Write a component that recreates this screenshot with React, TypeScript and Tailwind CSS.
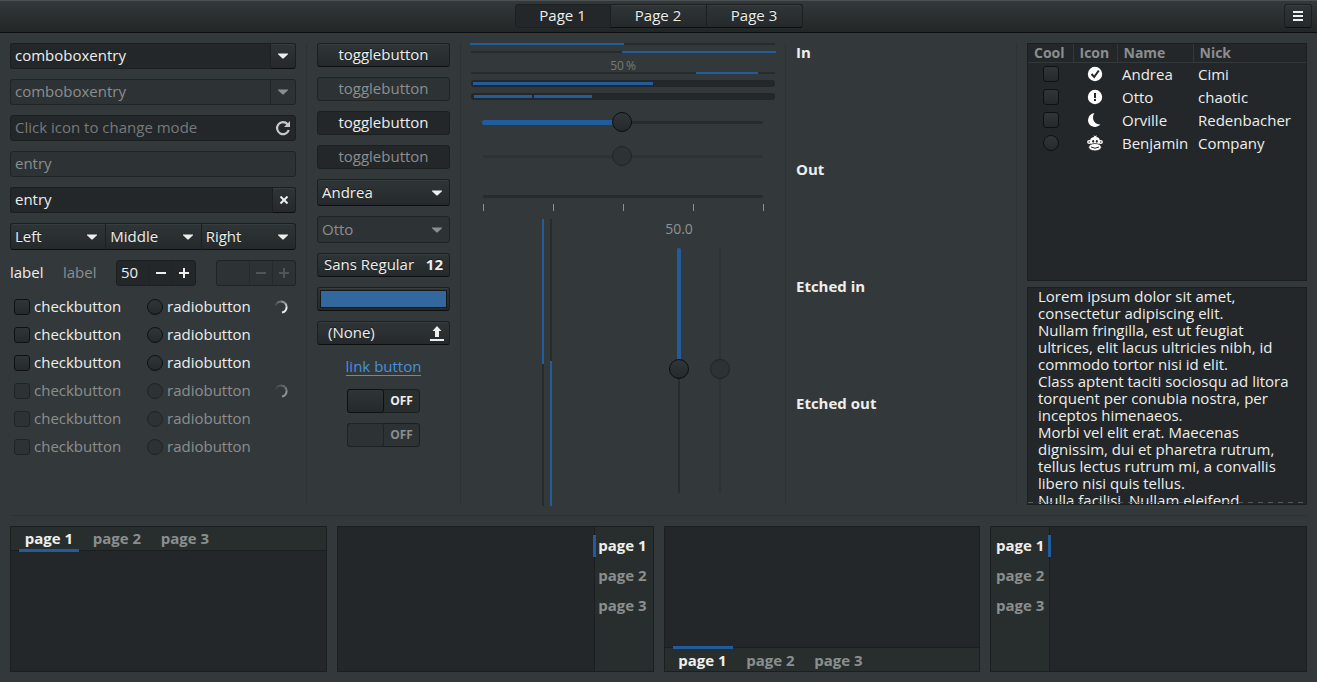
import { useState } from 'react';
import type { ReactNode } from 'react';
import clsx from 'clsx';

const raised =
  'rounded-[3px] border border-[#1b1f20] border-b-[#0d0f0f] bg-linear-to-b from-[#2f3537] to-[#25292b] text-[#eeeeec] [text-shadow:0_-1px_#15181a] shadow-[inset_0_1px_#383e40]';
const insensitive = 'rounded-[3px] border border-[#1f2324] bg-[#2d3234] text-[#8b8e8f]';
const sunken = 'rounded-[3px] border border-[#1b1f20] bg-[#232729] text-[#eeeeec]';

const loremText = `Lorem ipsum dolor sit amet,
consectetur adipiscing elit.
Nullam fringilla, est ut feugiat
ultrices, elit lacus ultricies nibh, id
commodo tortor nisi id elit.
Class aptent taciti sociosqu ad litora
torquent per conubia nostra, per
inceptos himenaeos.
Morbi vel elit erat. Maecenas
dignissim, dui et pharetra rutrum,
tellus lectus rutrum mi, a convallis
libero nisi quis tellus.
Nulla facilisi. Nullam eleifend
lectus eu velit.`;

function Arrow({ className }: { className?: string }) {
  return (
    <svg viewBox="0 0 10 6" className={clsx('pointer-events-none h-[6px] w-[10px]', className)} fill="currentColor">
      <path d="M0 .5h10v.8L5.500 5.500h-1L0 1.300z" />
    </svg>
  );
}

function Combo({ options, disabled, className, label }: { options: string[]; disabled?: boolean; className?: string; label: string }) {
  return (
    <div className="relative min-w-0 flex-1">
      <select
        aria-label={label}
        disabled={disabled}
        className={clsx('block h-[27px] w-full appearance-none px-1 pb-px leading-5 outline-none disabled:opacity-100', disabled ? insensitive : raised, className)}
      >
        {options.map((o) => (
          <option key={o}>{o}</option>
        ))}
      </select>
      <Arrow className={clsx('absolute top-[11px] right-2', disabled ? 'text-[#8b8e8f]' : 'text-[#eeeeec]')} />
    </div>
  );
}

function ComboEntry({ disabled }: { disabled?: boolean }) {
  return (
    <div className="flex h-[26px]">
      <input
        type="text"
        aria-label="Combo box entry"
        defaultValue="comboboxentry"
        disabled={disabled}
        className={clsx('min-w-0 flex-1 rounded-r-none! border-r-0! px-1 pb-[2px] outline-none', disabled ? insensitive : sunken)}
      />
      <button
        type="button"
        aria-label="Show choices"
        disabled={disabled}
        className={clsx('flex w-[26px] items-center justify-center rounded-l-none!', disabled ? insensitive : raised)}
      >
        <Arrow />
      </button>
    </div>
  );
}

function Spin({ value, disabled }: { value: string; disabled?: boolean }) {
  return (
    <div className={clsx('flex h-[26px] w-20', disabled ? insensitive : sunken)}>
      <input type="text" aria-label="Amount" defaultValue={value} disabled={disabled} className="w-8 bg-transparent pb-[2px] pl-1 outline-none" />
      {['M0 4h10v2H0z', 'M0 4h4V0h2v4h4v2H6v4H4V6H0z'].map((d, i) => (
        <button
          key={d}
          type="button"
          disabled={disabled}
          aria-label={i ? 'Increase' : 'Decrease'}
          className={clsx('flex w-[23px] items-center justify-center border-l', disabled ? 'border-[#262a2c] text-[#505556]' : 'border-[#202425]')}
        >
          <svg viewBox="0 0 10 10" className="size-[10px]" fill="currentColor">
            <path d={d} />
          </svg>
        </button>
      ))}
    </div>
  );
}

function Tick({ type, disabled, name, label }: { type: 'checkbox' | 'radio'; disabled?: boolean; name?: string; label?: string }) {
  return (
    <input
      type={type}
      name={name}
      aria-label={label}
      disabled={disabled}
      className={clsx(
        'size-4 shrink-0 appearance-none border checked:bg-[#215d9c]',
        type === 'radio' ? 'rounded-full' : 'rounded-[3px]',
        disabled ? 'border-[#202425] bg-[#2d3234]' : 'border-[#0e1011] bg-linear-to-b from-[#303638] to-[#25292b]'
      )}
    />
  );
}

function Spinner({ dim }: { dim?: boolean }) {
  return (
    <svg viewBox="0 0 14 14" className={clsx('size-[14px]', dim && 'opacity-50')} fill="none" stroke="#eeeeec" strokeWidth="2">
      <path d="M1.6 5.4A5.6 5.6 0 0 1 3.4 2.7" opacity=".15" />
      <path d="M3.4 2.7A5.6 5.6 0 0 1 7 1.4" opacity=".3" />
      <path d="M7 1.4A5.6 5.6 0 0 1 11.3 3.4" opacity=".5" />
      <path d="M11.3 3.4A5.6 5.6 0 0 1 12.6 7" opacity=".75" />
      <path d="M12.6 7A5.6 5.6 0 0 1 8 12.5" />
    </svg>
  );
}

function CheckRow({ disabled, spinner }: { disabled?: boolean; spinner?: boolean }) {
  return (
    <div className={clsx('flex h-[22px] items-center pl-1', disabled && 'text-[#8b8e8f]')}>
      <label className="flex w-[133px] items-center gap-1">
        <Tick type="checkbox" disabled={disabled} />
        <span className="pb-[2px]">checkbutton</span>
      </label>
      <label className="flex items-center gap-1">
        <Tick type="radio" name={disabled ? 'radio-off' : 'radio-on'} disabled={disabled} />
        <span className="pb-[2px]">radiobutton</span>
      </label>
      {spinner && (
        <span className="mr-2 ml-auto">
          <Spinner dim={disabled} />
        </span>
      )}
    </div>
  );
}

function EntryColumn() {
  return (
    <div>
      <div className="flex flex-col gap-[10px]">
        <ComboEntry />
        <ComboEntry disabled />
        <div className={clsx('flex h-[26px] items-center', sunken)}>
          <input
            type="text"
            aria-label="Mode"
            placeholder="Click icon to change mode"
            className="min-w-0 flex-1 bg-transparent px-1 pb-[2px] outline-none placeholder:text-[#76797a]"
          />
          <button type="button" aria-label="Change mode" className="mr-1 text-[#c8c9c8]">
            <svg viewBox="0 0 16 16" className="size-4" fill="none" stroke="currentColor" strokeWidth="2.2">
              <path d="M12.600 4.200A6 6 0 1 0 13.800 10" />
              <path d="M15 1v6H9z" fill="currentColor" stroke="none" />
            </svg>
          </button>
        </div>
        <input type="text" aria-label="Disabled entry" defaultValue="entry" disabled className={clsx('h-[26px] w-full px-1 pb-[2px]', insensitive)} />
        <div className="flex h-[26px]">
          <input type="text" aria-label="Entry" defaultValue="entry" className={clsx('min-w-0 flex-1 rounded-r-none! border-r-0! px-1 pb-[2px] outline-none', sunken)} />
          <button type="button" aria-label="Clear" className={clsx('flex w-6 items-center justify-center rounded-l-none!', raised)}>
            <svg viewBox="0 0 8 8" className="size-2" stroke="currentColor" strokeWidth="2">
              <path d="M.5.5l7 7M7.500.5l-7 7" />
            </svg>
          </button>
        </div>
        <div className="flex">
          <Combo label="Left" options={['Left']} className="rounded-r-none! border-r-0!" />
          <Combo label="Middle" options={['Middle']} className="rounded-none! border-r-0!" />
          <Combo label="Right" options={['Right']} className="rounded-l-none!" />
        </div>
        <div className="flex items-center">
          <span className="w-[53px] pb-[2px]">label</span>
          <span className="w-[53px] pb-[2px] text-[#8b8e8f]">label</span>
          <Spin value="50" />
          <div className="ml-auto">
            <Spin value="" disabled />
          </div>
        </div>
      </div>
      <div className="mt-[10px] flex flex-col gap-[6px]">
        <CheckRow spinner />
        <CheckRow />
        <CheckRow />
        <CheckRow disabled spinner />
        <CheckRow disabled />
        <CheckRow disabled />
      </div>
    </div>
  );
}

function Switch({ disabled }: { disabled?: boolean }) {
  return (
    <button
      type="button"
      role="switch"
      aria-checked="false"
      disabled={disabled}
      className={clsx(
        'mx-auto flex h-6 w-[73px] rounded-[3px] border border-[#1b1f20] text-xs font-bold',
        disabled ? 'bg-[#2d3234] text-[#8b8e8f]' : 'bg-[#282e2d] text-[#eeeeec]'
      )}
    >
      <span
        className={clsx(
          '-my-px -ml-px h-6 w-[37px] rounded-[3px] border',
          disabled ? 'border-[#1f2324]' : 'border-[#0e1011] bg-linear-to-b from-[#2f3537] to-[#25292b]'
        )}
      />
      <span className="flex h-full flex-1 items-center justify-center">OFF</span>
    </button>
  );
}

function ButtonColumn() {
  return (
    <div className="flex flex-col gap-[10px]">
      <button type="button" className={clsx('h-6 pb-[2px]', raised)}>togglebutton</button>
      <button type="button" disabled className={clsx('h-6 pb-[2px]', insensitive)}>togglebutton</button>
      <button type="button" aria-pressed="true" className={clsx('h-6 pb-[2px]', sunken)}>togglebutton</button>
      <button type="button" aria-pressed="true" disabled className={clsx('h-6 pb-[2px]', sunken, 'text-[#8b8e8f]!')}>togglebutton</button>
      <div className="flex">
        <Combo label="Person" options={['Andrea', 'Otto']} />
      </div>
      <div className="flex">
        <Combo label="Other person" options={['Otto']} disabled />
      </div>
      <button type="button" className={clsx('flex h-6 items-center justify-between px-[6px] pb-[2px]', raised)}>
        <span>Sans Regular</span>
        <span className="font-bold">12</span>
      </button>
      <input
        type="color"
        aria-label="Colour"
        defaultValue="#33689f"
        className={clsx('h-6 w-full p-[2px] [&::-webkit-color-swatch]:rounded-none [&::-webkit-color-swatch]:border-[#15181a] [&::-webkit-color-swatch-wrapper]:p-0', raised)}
      />
      <button type="button" className={clsx('flex h-6 items-center justify-between pr-[5px] pl-[10px]', raised)}>
        <span className="pb-[2px]">(None)</span>
        <svg viewBox="0 0 14 15" className="h-[15px] w-[14px]" fill="currentColor">
          <path d="M7 0l4.500 5H9v6H5V5H2.500zM0 13h14v2H0z" />
        </svg>
      </button>
      <div className="flex h-6 items-center justify-center pb-[2px]">
        <a href="#" className="border-b border-[#4a90d9] leading-[18px] text-[#4a90d9]">link button</a>
      </div>
      <Switch />
      <Switch disabled />
    </div>
  );
}

function Scale({ value, disabled }: { value: number; disabled?: boolean }) {
  return (
    <div className="relative mx-[2px] h-5">
      <div className={clsx('absolute inset-x-[10px] top-[9px] h-[3px] rounded-full', disabled ? 'bg-[#2d3234]' : 'bg-[#272c2b]')} />
      {!disabled && <div className="absolute top-2 left-[9px] h-[5px] rounded-l-full bg-[#215d9c]" style={{ width: `${value - 3}%` }} />}
      <input
        type="range"
        aria-label="Horizontal scale"
        step={0.5}
        defaultValue={value}
        disabled={disabled}
        className={clsx(
          'absolute inset-0 w-full appearance-none bg-transparent [&::-webkit-slider-thumb]:size-5 [&::-webkit-slider-thumb]:appearance-none [&::-webkit-slider-thumb]:rounded-full [&::-webkit-slider-thumb]:border',
          disabled
            ? '[&::-webkit-slider-thumb]:border-[#202425] [&::-webkit-slider-thumb]:bg-[#2d3234]'
            : '[&::-webkit-slider-thumb]:border-[#0b0d0d] [&::-webkit-slider-thumb]:bg-linear-to-b [&::-webkit-slider-thumb]:from-[#303638] [&::-webkit-slider-thumb]:to-[#25292b]'
        )}
      />
    </div>
  );
}

function VerticalScale({ disabled }: { disabled?: boolean }) {
  return (
    <div className="relative flex w-5 flex-1 justify-center">
      <div className={clsx('my-[10px] w-[2px] rounded-full', disabled ? 'bg-[#2d3234]' : 'bg-[#272c2b]')} />
      {!disabled && <div className="absolute top-[9px] left-2 h-[46%] w-1 rounded-t-full bg-[#215d9c]" />}
      <input
        type="range"
        aria-label="Vertical scale"
        defaultValue={49}
        disabled={disabled}
        className={clsx(
          'absolute inset-0 h-full w-5 appearance-none bg-transparent [writing-mode:vertical-lr] [&::-webkit-slider-thumb]:size-5 [&::-webkit-slider-thumb]:appearance-none [&::-webkit-slider-thumb]:rounded-full [&::-webkit-slider-thumb]:border',
          disabled
            ? '[&::-webkit-slider-thumb]:border-[#202425] [&::-webkit-slider-thumb]:bg-[#2d3234]'
            : '[&::-webkit-slider-thumb]:border-[#0b0d0d] [&::-webkit-slider-thumb]:bg-linear-to-b [&::-webkit-slider-thumb]:from-[#303638] [&::-webkit-slider-thumb]:to-[#25292b]'
        )}
      />
    </div>
  );
}

function ProgressColumn() {
  return (
    <div className="flex min-h-0 flex-col">
      <div className="h-[2px] bg-[#272c2b]">
        <div className="-ml-px h-full w-[154px] bg-[#215d9c]" />
      </div>
      <div className="mt-[6px] flex h-[2px] justify-end bg-[#272c2b]">
        <div className="-mr-px h-full w-[154px] bg-[#215d9c]" />
      </div>
      <div className="mt-[5px] h-[14px] text-center text-xs leading-4 text-[#76797a]">50{'\u2009'}%</div>
      <div className="flex h-[2px] justify-end bg-[#272c2b] pr-[17px]">
        <div className="h-full w-[62px] bg-[#215d9c]" />
      </div>
      <div className="mt-[6px] flex h-[7px] items-center rounded-[3px] bg-[#232729] px-[2px]">
        <div className="h-[3px] w-[60%] bg-[#215d9c]" />
      </div>
      <div className="mt-[6px] flex h-[7px] items-center gap-[2px] rounded-[3px] bg-[#232729] px-[3px]">
        <div className="h-[3px] w-[58px] bg-[#215d9c]" />
        <div className="h-[3px] w-[58px] bg-[#215d9c]" />
      </div>
      <div className="mt-3 flex flex-col gap-[14px]">
        <Scale value={49.5} />
        <Scale value={49.5} disabled />
      </div>
      <div className="mx-3 mt-[29px] h-[3px] rounded-full bg-[#272c2b]" />
      <div className="mr-[11px] ml-3 mt-[6px] flex justify-between">
        {[0, 1, 2, 3, 4].map((n) => (
          <div key={n} className="h-[7px] w-px bg-[#8e9192]" />
        ))}
      </div>
      <div className="mt-2 -mb-px flex min-h-0 flex-1 pl-[71px]">
        <div className="flex gap-[6px]">
          <div className="w-[2px] bg-[#272c2b]">
            <div className="h-[145px] bg-[#215d9c]" />
          </div>
          <div className="flex w-[2px] items-end bg-[#272c2b]">
            <div className="h-[145px] w-full bg-[#215d9c]" />
          </div>
        </div>
        <div className="ml-[108px] flex w-[38px] flex-col items-center pb-[3px]">
          <span className="text-sm leading-5 text-[#8e9192]">50.0</span>
          <VerticalScale />
        </div>
        <div className="ml-3 flex flex-col pt-5 pb-[3px]">
          <VerticalScale disabled />
        </div>
      </div>
    </div>
  );
}

const iconClass = 'mx-auto block size-4';

const people: { name: string; nick: string; type: 'checkbox' | 'radio'; icon: ReactNode }[] = [
  {
    name: 'Andrea',
    nick: 'Cimi',
    type: 'checkbox',
    icon: (
      <svg viewBox="0 0 16 16" className={iconClass}>
        <circle cx="8" cy="8" r="7.200" fill="#fff" />
        <path d="M4.500 8l2.700 3 4.600-6.500" fill="none" stroke="#232729" strokeWidth="2" />
      </svg>
    ),
  },
  {
    name: 'Otto',
    nick: 'chaotic',
    type: 'checkbox',
    icon: (
      <svg viewBox="0 0 16 16" className={iconClass}>
        <circle cx="8" cy="8" r="7.200" fill="#fff" />
        <path d="M7 4h2v5H7zM7 10h2v2H7z" fill="#232729" />
      </svg>
    ),
  },
  {
    name: 'Orville',
    nick: 'Redenbacher',
    type: 'checkbox',
    icon: (
      <svg viewBox="0 0 16 16" className={iconClass}>
        <path d="M7.500 1A7.200 7.200 0 0 0 1 8C1 14 8 17.500 13.500 12.500C7 13 4 6 7.500 1z" fill="#fff" />
      </svg>
    ),
  },
  {
    name: 'Benjamin',
    nick: 'Company',
    type: 'radio',
    icon: (
      <svg viewBox="0 0 16 16" className={iconClass} fill="#fff">
        <path d="M6.500 0L8 1.200 9.800.2 9.300 2C12 2.400 13.200 4 13.200 7.500L11.500 9.500h-7L2.800 7.500C2.800 4 4.200 2.300 7.200 2z" />
        <circle cx="2.200" cy="7" r="2.100" />
        <circle cx="13.800" cy="7" r="2.100" />
        <circle cx="2.200" cy="7" r=".7" fill="#232729" />
        <circle cx="13.800" cy="7" r=".7" fill="#232729" />
        <ellipse cx="8" cy="12.200" rx="6.300" ry="3.700" stroke="#232729" strokeWidth=".8" />
        <ellipse cx="6.200" cy="6.300" rx="1" ry="1.400" fill="#232729" />
        <ellipse cx="9.800" cy="6.300" rx="1" ry="1.400" fill="#232729" />
        <path d="M4 12Q8 14.500 12 12" fill="none" stroke="#232729" />
      </svg>
    ),
  },
];

function TreeView() {
  return (
    <div className="min-h-0 flex-1 border border-[#1b1f20] bg-[#232729]">
      <table className="w-full table-fixed border-collapse text-left">
        <thead>
          <tr className="h-[18px] border-b border-[#33393b] text-sm leading-[18px] text-[#8b8e8f]">
            <th className="w-[45px] border-r border-[#33393b] p-0 pl-[6px] font-bold">Cool</th>
            <th className="w-11 border-r border-[#33393b] p-0 pl-[6px] font-bold">Icon</th>
            <th className="w-[76px] border-r border-[#33393b] p-0 pl-[6px] font-bold">Name</th>
            <th className="p-0 pl-[6px] font-bold">Nick</th>
          </tr>
        </thead>
        <tbody>
          {people.map((p) => (
            <tr key={p.name} className="h-[23px] leading-[22px]">
              <td className="p-0">
                <div className="flex justify-center">
                  <Tick type={p.type} label={`${p.name} is cool`} />
                </div>
              </td>
              <td className="p-0">{p.icon}</td>
              <td className="p-0 pl-[5px]">{p.name}</td>
              <td className="p-0 pl-[5px]">{p.nick}</td>
            </tr>
          ))}
        </tbody>
      </table>
    </div>
  );
}

type Side = 'top' | 'right' | 'bottom' | 'left';

const notebookClass: Record<Side, string> = {
  top: 'flex-col',
  bottom: 'flex-col-reverse',
  left: 'flex-row',
  right: 'flex-row-reverse',
};
const stripClass: Record<Side, string> = {
  top: 'h-6 border-b px-2 gap-2',
  bottom: 'h-6 border-t px-2 gap-2',
  left: 'w-[59px] border-r flex-col py-2 gap-2',
  right: 'w-[59px] border-l flex-col py-2 gap-2',
};
const tabClass: Record<Side, string> = {
  top: 'w-[60px] pb-[2px]',
  bottom: 'w-[60px]',
  left: 'h-[22px] pb-[2px]',
  right: 'h-[22px] pr-[2px] pb-[2px]',
};
const markerClass: Record<Side, string> = {
  top: 'inset-x-0 -bottom-[2px] h-[3px]',
  bottom: 'inset-x-0 -top-[2px] h-[3px]',
  left: 'inset-y-0 -right-[2px] w-[3px]',
  right: 'inset-y-0 -left-[2px] w-[3px]',
};

function Notebook({ side }: { side: Side }) {
  const [active, setActive] = useState(1);
  return (
    <div className={clsx('flex h-[146px] border border-[#1b1f20] bg-[#232729]', notebookClass[side])}>
      <div role="tablist" className={clsx('flex shrink-0 border-[#1b1f20] bg-[#282e2d]', stripClass[side])}>
        {[1, 2, 3].map((n) => (
          <button
            key={n}
            type="button"
            role="tab"
            aria-selected={active === n}
            onClick={() => setActive(n)}
            className={clsx('relative font-bold', tabClass[side], active === n ? 'text-[#eeeeec]' : 'text-[#8b8e8f]')}
          >
            page {n}
            {active === n && <span className={clsx('absolute bg-[#215d9c]', markerClass[side])} />}
          </button>
        ))}
      </div>
    </div>
  );
}

const Separator = () => <div className="bg-[#2d3234]" />;

export default function App() {
  const [page, setPage] = useState(1);

  return (
    <div className="flex min-h-screen flex-col bg-[#33393b] font-['Open_Sans',sans-serif] text-[15px] leading-5 text-[#eeeeec]">
      <header className="grid h-[33px] grid-cols-[1fr_auto_1fr] items-start border-t border-b border-t-[#4c5254] border-b-[#0d0f0f] bg-linear-to-b from-[#33393b] to-[#222626] px-[5px] pt-[3px]">
        <nav className="col-start-2 flex">
          {[1, 2, 3].map((n) => (
            <button
              key={n}
              type="button"
              onClick={() => setPage(n)}
              className={clsx(
                'h-6 w-24 pb-[2px]',
                page === n ? sunken : raised,
                n < 3 && 'rounded-r-none!',
                n > 1 && 'rounded-l-none! border-l-0!'
              )}
            >
              Page {n}
            </button>
          ))}
        </nav>
        <button type="button" aria-label="Menu" className={clsx('ml-auto flex h-6 w-7 items-center justify-center', raised)}>
          <svg viewBox="0 0 10 10" className="size-[10px]" fill="currentColor">
            <path d="M0 0h10v2H0zM0 4h10v2H0zM0 8h10v2H0z" />
          </svg>
        </button>
      </header>

      <main className="flex flex-1 flex-col p-[10px]">
        <section className="grid flex-1 grid-cols-[286px_1px_133px_1px_304px_1px_1fr_1px_280px] gap-x-[10px]">
          <EntryColumn />
          <Separator />
          <ButtonColumn />
          <Separator />
          <ProgressColumn />
          <Separator />
          <div className="grid grid-rows-4 gap-[6px] leading-[18px] font-bold">
            <div>In</div>
            <div>Out</div>
            <div>Etched in</div>
            <div>Etched out</div>
          </div>
          <Separator />
          <div className="flex flex-col gap-[6px]">
            <TreeView />
            <div className="relative h-[218px]">
              <textarea
                aria-label="Text view"
                defaultValue={loremText}
                className="block h-full w-full resize-none overflow-hidden border border-[#1b1f20] bg-[#232729] px-[10px] leading-[17px] outline-none"
              />
              <div className="pointer-events-none absolute inset-x-px bottom-[2px] h-px bg-[repeating-linear-gradient(90deg,#565a5b_0_5px,transparent_5px_10px)]" />
            </div>
          </div>
        </section>

        <hr className="my-[10px] border-[#2d3234]" />

        <section className="grid grid-cols-4 gap-[10px]">
          <Notebook side="top" />
          <Notebook side="right" />
          <Notebook side="bottom" />
          <Notebook side="left" />
        </section>
      </main>
    </div>
  );
}
